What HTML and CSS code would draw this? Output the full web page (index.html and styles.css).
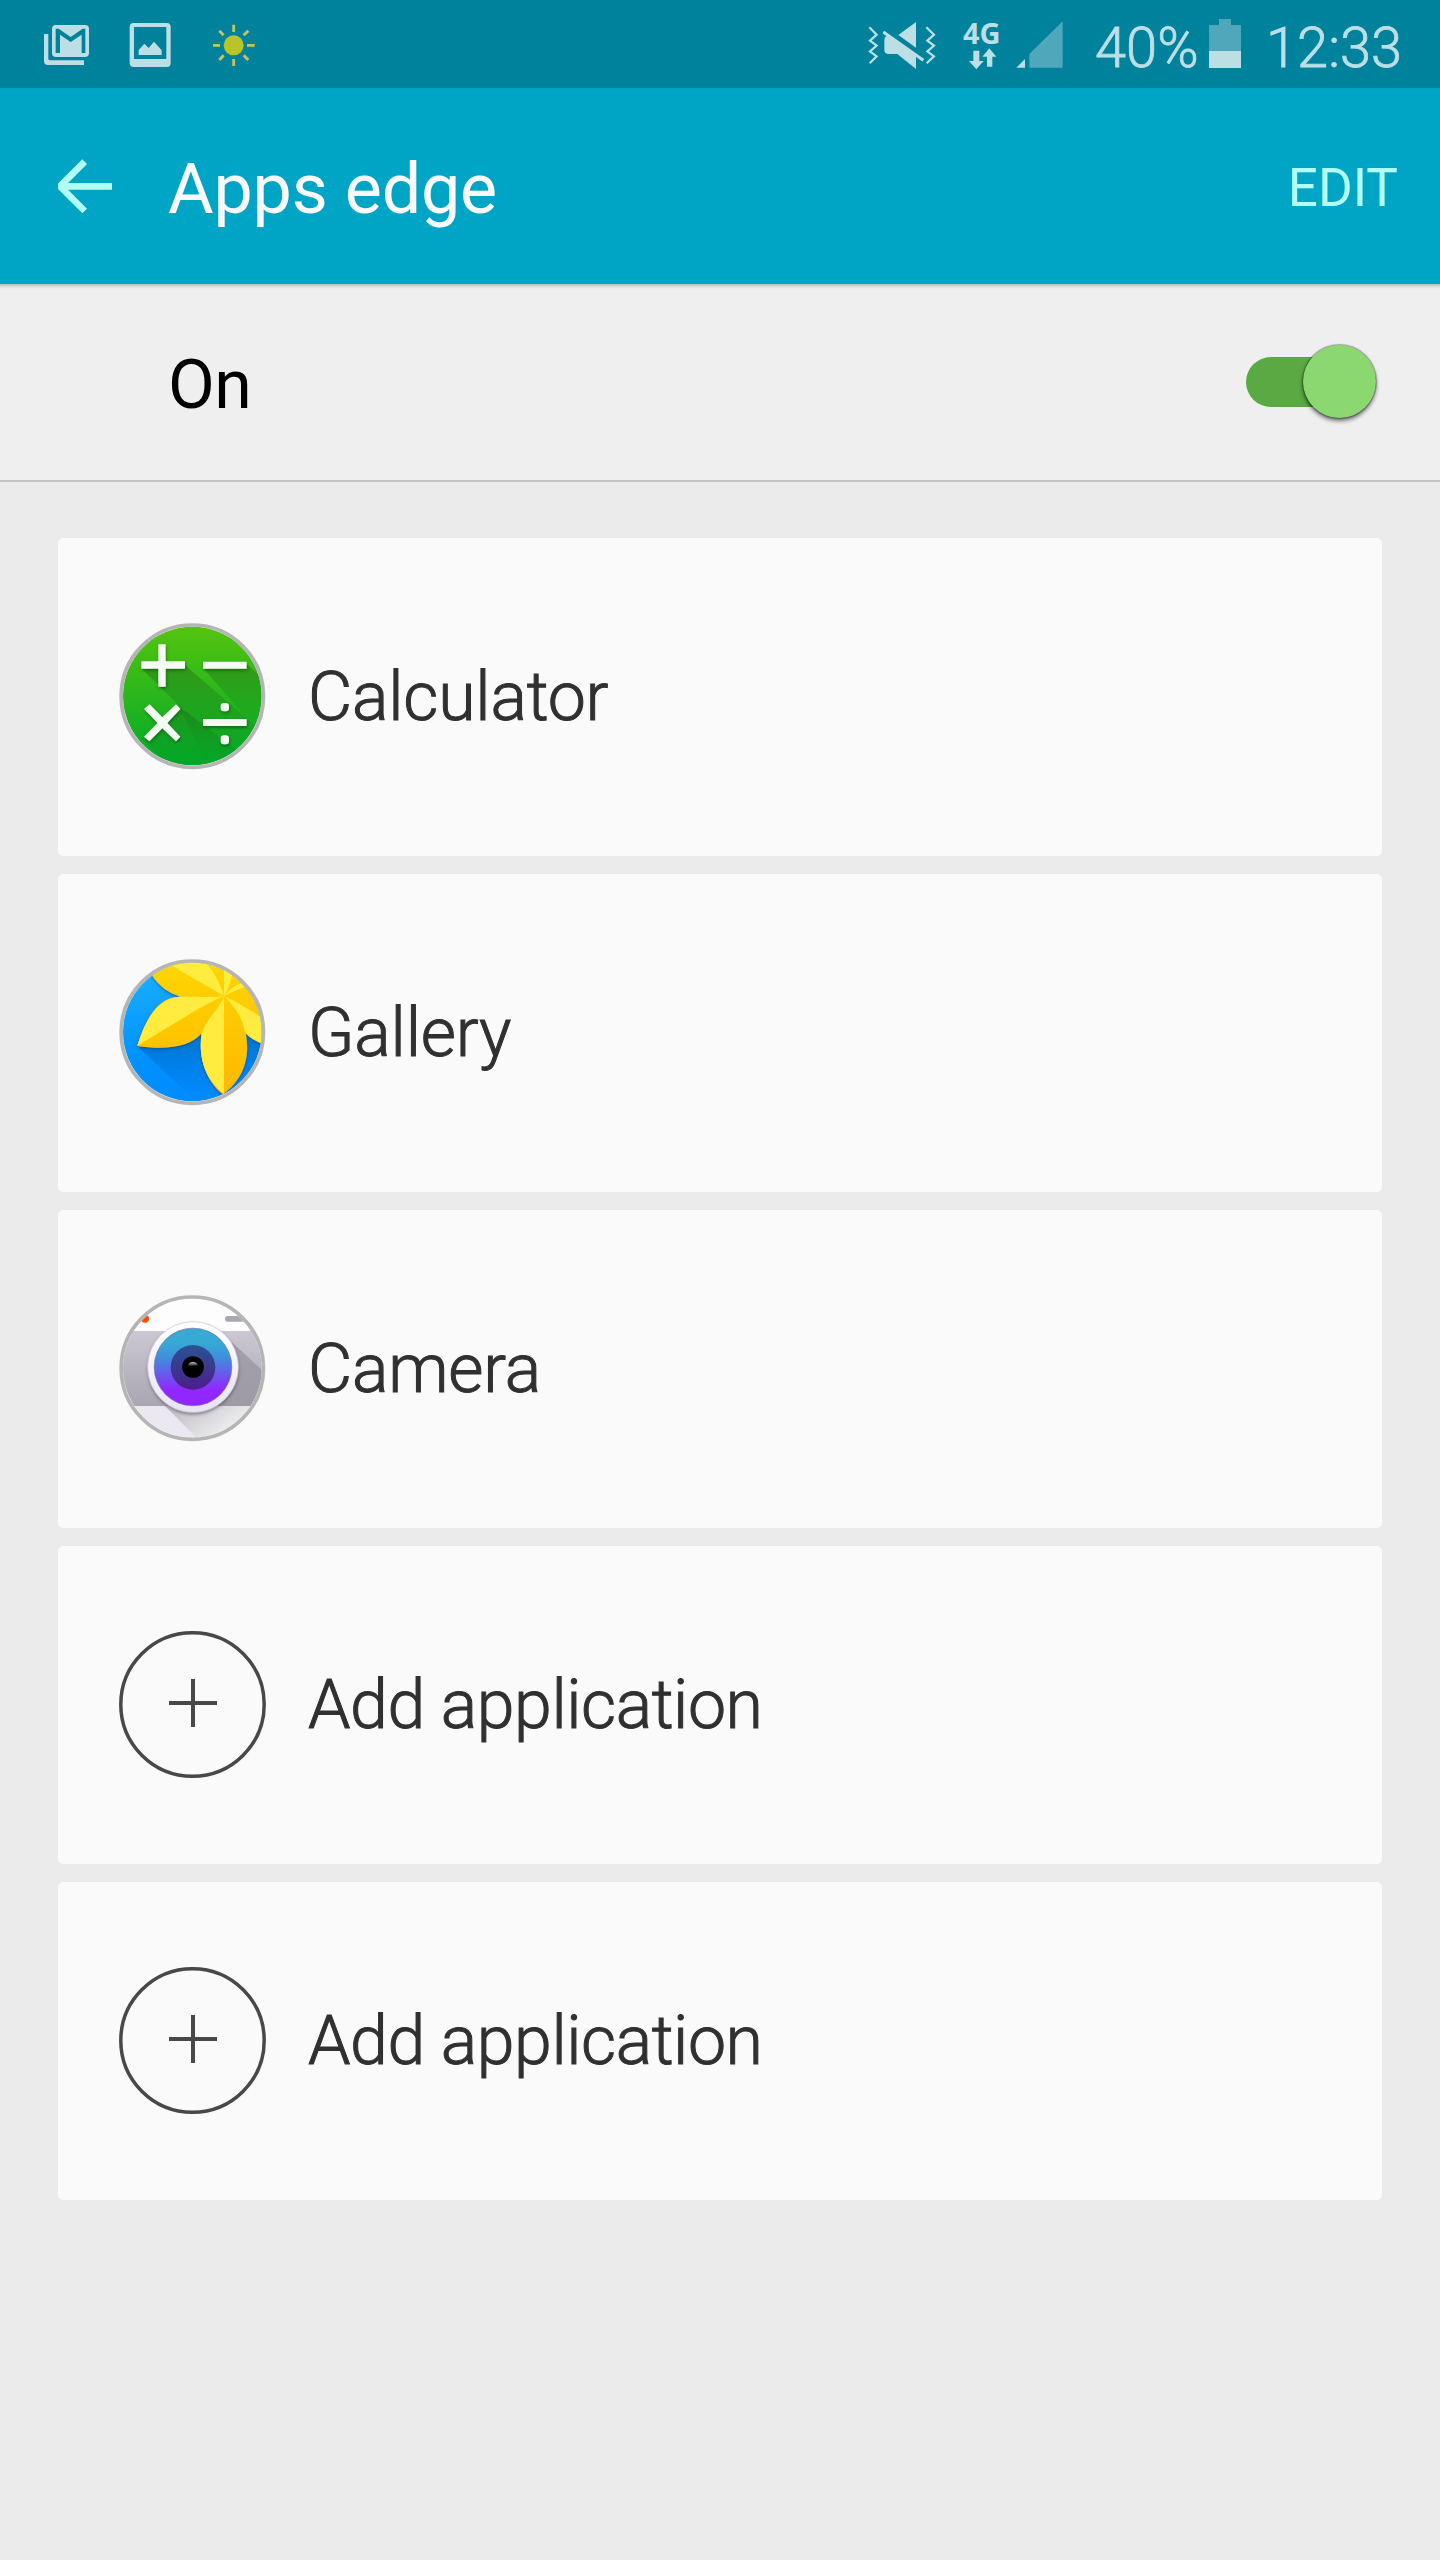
FILE: index.html
```html
<!DOCTYPE html>
<html lang="en">
<head>
<meta charset="utf-8">
<title>Apps edge</title>
<link rel="stylesheet" href="styles.css">
</head>
<body>
<div class="status">
  <svg class="notifications" width="260" height="88" viewBox="0 0 780 264">
    <g fill="#bbdfe5">
      <path d="M72 102h13v74q0 5 5 5h102v14H84q-12 0-12-12z"/>
      <path fill-rule="evenodd" d="M108 75h87q12 0 12 12v72q0 12-12 12h-87q-12 0-12-12V87q0-12 12-12zM107 86v73h13v-55l32 22 33-22v55h11V86h-8l-36 25-36-25z"/>
      <path fill-rule="evenodd" d="M341 69h99q12 0 12 12v108q0 12-12 12h-99q-12 0-12-12V81q0-12 12-12zM342 81v96h97V81z"/>
      <path d="M356 165v-15l17-19 13 13 16-19 23 26v14z"/>
    </g>
    <circle cx="641" cy="136" r="30" fill="#bbc32b"/>
    <path d="M641 74v22M641 177v21M579 136h21M681 136h23M598 92l13 14M671 106l14-14M598 180l13-14M671 166l14 14" stroke="#bdc95e" stroke-width="8.5"/>
  </svg>
  <svg class="mute" width="68" height="88" viewBox="84 0 204 264">
    <path d="M88 82l22 22-20 18 20 15-20 17 20 15-21 21M259 82l23 22-20 18 20 15-20 17 20 15-22 21" fill="none" stroke="#bbdfe5" stroke-width="6.5"/>
    <path d="M175 105l53-39v77zM139 108l8 1 81 59v39l-56-45h-26q-13 0-13-13v-28q0-9 6-13z" fill="#bbdfe5"/>
    <path d="M130 96l120 85" stroke="#bbdfe5" stroke-width="9"/>
  </svg>
  <div class="network">
    <span class="network-label">4G</span>
    <svg width="28" height="22" viewBox="387 145 84 66"><path d="M400 153h18v31h13l-22 25-22-25h13zM441 201v-30h-14l21-25 21 25h-12v30z" fill="#bbdfe5"/></svg>
  </div>
  <svg class="signal" width="48" height="88" viewBox="528 0 144 264">
    <path d="M568 203v-41l100-98v139z" fill="#4ea7ba"/><path d="M529 203l26-26v26z" fill="#bbdfe5"/>
  </svg>
  <span class="battery-text">40%</span>
  <svg class="battery" width="32" height="88" viewBox="0 0 32 88">
    <path d="M0 25h10v-6h12v6h10v26H0z" fill="#4ea7ba"/><path d="M0 51h32v17H0z" fill="#bbdfe5"/>
  </svg>
  <span class="clock">12:33</span>
</div>
<header class="appbar">
  <svg class="back" width="60" height="60" viewBox="0 0 180 180"><path d="M80 9L6 83l74 74M17 83h145" transform="translate(0 5)" fill="none" stroke="#b2fff3" stroke-width="20"/></svg>
  <h1 class="title">Apps edge</h1>
  <span class="edit">EDIT</span>
</header>
<section class="master">
  <span class="master-label">On</span>
  <div class="switch"><div class="thumb"></div></div>
</section>
<main class="list">
  <div class="card">
    <svg class="icon" viewBox="24 36 444 444">
      <defs>
        <linearGradient id="calc" x1="0" y1="0" x2="0" y2="1"><stop offset="0" stop-color="#53c40f"/><stop offset="1" stop-color="#00aa29"/></linearGradient>
        <linearGradient id="shade" x1="0" y1="0" x2="0" y2="1"><stop offset="0" stop-color="#185018" stop-opacity=".34"/><stop offset="1" stop-color="#087a22" stop-opacity="0"/></linearGradient>
        <clipPath id="disc"><circle cx="247" cy="258" r="208"/></clipPath>
        <filter id="drop" x="-20%" y="-20%" width="140%" height="150%"><feDropShadow dx="2" dy="5" stdDeviation="4" flood-color="#003000" flood-opacity=".5"/></filter>
      </defs>
      <circle cx="247" cy="258" r="208" fill="url(#calc)"/>
      <g clip-path="url(#disc)" fill="url(#shade)">
        <path d="M94 175L224 165 440 350 350 480 300 480 205 285z"/>
        <path d="M280 175l130-12 60 50v180z"/>
        <path d="M104 392L208 290 380 420 260 490H190z"/>
      </g>
      <g fill="#f5fcf3" filter="url(#drop)">
        <path d="M145 103h22v51h58v22h-58v54h-22v-54H94v-22h51zM279 155h131v21H279zM279 327h131v21H279z"/>
        <path d="M119 283l38 39 41-39 13 14-39 42 39 41-13 14-41-39-39 39-16-14 41-41-41-42z"/>
        <rect x="332" y="279" width="25" height="25" rx="10"/><rect x="332" y="376" width="25" height="27" rx="10"/>
      </g>
      <circle cx="247" cy="258.500" r="213.500" fill="none" stroke="#b5b5b5" stroke-width="11"/>
    </svg>
    <span class="label">Calculator</span>
  </div>
  <div class="card">
    <svg class="icon" viewBox="24 36 444 444">
      <defs>
        <linearGradient id="sky" x1="0" y1="0" x2="0" y2="1"><stop offset="0" stop-color="#1cb1ff"/><stop offset=".7" stop-color="#0091ff"/><stop offset="1" stop-color="#008cff"/></linearGradient>
        <linearGradient id="gold" gradientUnits="userSpaceOnUse" x1="0" y1="50" x2="0" y2="445"><stop offset="0" stop-color="#ffd500"/><stop offset="1" stop-color="#ffb800"/></linearGradient>
        <linearGradient id="cast" gradientUnits="userSpaceOnUse" x1="200" y1="300" x2="200" y2="460"><stop offset="0" stop-color="#005bb0" stop-opacity=".5"/><stop offset="1" stop-color="#0070df" stop-opacity=".08"/></linearGradient>
        <filter id="leafdrop" x="-20%" y="-20%" width="140%" height="140%"><feDropShadow dx="0" dy="4" stdDeviation="4" flood-color="#003a78" flood-opacity=".6"/></filter>
      </defs>
      <circle cx="247" cy="258" r="208" fill="url(#sky)"/>
      <g clip-path="url(#disc)">
        <path d="M82 300L250 460 345 445 273 262z" fill="url(#cast)"/>
        <path d="M410 262l50 30v50L345 445z" fill="url(#cast)"/>
        <g filter="url(#leafdrop)">
          <path d="M342 150C300 160 250 157 212 152 175 142 145 118 126 88L170 40H480V300Q430 288 407 262C424 345 390 410 338 445 295 410 262 345 275 262 240 305 165 312 82 300 108 215 145 150 212 152z" fill="url(#gold)"/>
        </g>
        <g fill="#ffec3e">
          <path d="M342 150L180 56 195 40H275L290 52Q322 88 342 150z"/>
          <path d="M342 150C300 157 250 150 212 152 145 155 106 220 82 299L205 225Q275 180 342 150z"/>
          <path d="M342 150V443C295 410 262 345 275 262 290 215 325 195 342 150z"/>
          <path d="M342 150V70L368 82Q360 120 342 150z"/>
          <path d="M342 150Q370 118 394 112L405 122Q374 133 342 150z"/>
          <path d="M342 150Q400 177 460 218V295Q425 280 405 260 398 205 342 150z"/>
        </g>
      </g>
      <circle cx="247" cy="258.500" r="213.500" fill="none" stroke="#b5b5b5" stroke-width="11"/>
    </svg>
    <span class="label">Gallery</span>
  </div>
  <div class="card">
    <svg class="icon" viewBox="24 36 444 444">
      <defs>
        <linearGradient id="band" x1="0" y1="0" x2="0" y2="1"><stop offset="0" stop-color="#cbc7d3"/><stop offset="1" stop-color="#aaa6b1"/></linearGradient>
        <linearGradient id="lens" x1="0" y1="0" x2="0" y2="1"><stop offset=".2" stop-color="#36a9d5"/><stop offset=".4" stop-color="#428ade"/><stop offset=".8" stop-color="#9126ff"/></linearGradient>
        <linearGradient id="iris" x1="0" y1="0" x2="0" y2="1"><stop offset="0" stop-color="#285493"/><stop offset="1" stop-color="#4e1d8b"/></linearGradient>
        <linearGradient id="rim" x1="0" y1="0" x2="0" y2="1"><stop offset="0" stop-color="#fff"/><stop offset="1" stop-color="#e9e3f3"/></linearGradient>
        <linearGradient id="glint" x1="0" y1="0" x2="0" y2="1"><stop offset="0" stop-color="#ccc"/><stop offset="1" stop-color="#222"/></linearGradient>
        <linearGradient id="fade" gradientUnits="userSpaceOnUse" x1="220" y1="370" x2="300" y2="480"><stop offset="0" stop-color="#c4c2c8"/><stop offset="1" stop-color="#ecebee"/></linearGradient>
        <linearGradient id="bandshade" gradientUnits="userSpaceOnUse" x1="380" y1="180" x2="380" y2="372"><stop offset="0" stop-color="#a39faa"/><stop offset="1" stop-color="#9e9aa6"/></linearGradient>
        <filter id="rimdrop" x="-20%" y="-20%" width="140%" height="140%"><feDropShadow dx="1" dy="6" stdDeviation="5" flood-color="#403850" flood-opacity=".5"/></filter>
      </defs>
      <circle cx="247" cy="258" r="208" fill="#fdfdfd"/>
      <g clip-path="url(#disc)">
        <path d="M30 372h440v110H30z" fill="#ebe8f1"/>
        <path d="M165 372h305v40L400 480H272z" fill="url(#fade)"/>
        <path d="M30 147h440v225H30z" fill="url(#band)"/>
        <path d="M365 180L460 268V372H300z" fill="url(#bandshade)"/>
        <circle cx="105" cy="110" r="12" fill="#ff4d00"/>
        <rect x="345" y="102" width="70" height="17" rx="8" fill="#aaa6b4"/>
      </g>
      <circle cx="249" cy="255" r="136" fill="url(#rim)" stroke="#c9c5cf" stroke-width="2" filter="url(#rimdrop)"/>
      <circle cx="249" cy="255" r="116.500" fill="url(#lens)" stroke="#766ca0" stroke-width="2"/>
      <circle cx="249" cy="256" r="67" fill="url(#iris)"/>
      <circle cx="249" cy="255" r="32.500" fill="#000"/>
      <path d="M234 251q2-11 15-11t14 11z" fill="url(#glint)"/>
      <circle cx="247" cy="258.500" r="213.500" fill="none" stroke="#b5b5b5" stroke-width="11"/>
    </svg>
    <span class="label">Camera</span>
  </div>
  <div class="card">
    <svg class="icon" viewBox="0 0 148 148"><g fill="none" stroke="#484848"><circle cx="74.500" cy="74.500" r="71.700" stroke-width="3.500"/><path d="M51 73h48M75 49v48" stroke-width="4"/></g></svg>
    <span class="label add">Add application</span>
  </div>
  <div class="card">
    <svg class="icon" viewBox="0 0 148 148"><g fill="none" stroke="#484848"><circle cx="74.500" cy="74.500" r="71.700" stroke-width="3.500"/><path d="M51 73h48M75 49v48" stroke-width="4"/></g></svg>
    <span class="label add">Add application</span>
  </div>
</main>
</body>
</html>
```

FILE: styles.css
```css
* { box-sizing: border-box; }
body { margin: 0; width: 1440px; height: 2560px; background: #ebebeb; font-family: Roboto, sans-serif; display: flex; flex-direction: column; }
svg { display: block; flex: none; }
span, h1 { white-space: nowrap; }

.status { height: 88px; flex: none; display: flex; background: #00829d; color: #bbdfe5; padding-left: 20px; }
.mute { margin-left: 588px; }
.network { margin-left: 27px; width: 38px; padding-top: 17px; }
.network-label { display: block; height: 31px; line-height: 31px; font: 700 29px/31px "Noto Sans", sans-serif; }
.network svg { margin-left: 6px; }
.signal { margin-left: 15px; }
.battery-text, .clock { font-size: 56px; font-weight: 300; line-height: 96px; -webkit-text-stroke: .8px #bbdfe5; }
.battery-text { margin-left: 31px; width: 114px; }
.clock { margin-left: 25px; }

.appbar { height: 196px; flex: none; display: flex; background: #00a5c5; padding: 0 42px 0 54px; }
.back { margin: 69px -4px 0 4px; }
.title { margin: 0 auto 0 54px; font-size: 70px; font-weight: 400; line-height: 202px; letter-spacing: -.2px; color: #fafafa; }
.edit { font-size: 53px; line-height: 200px; color: #b2fff3; }

.master { height: 198px; flex: none; display: flex; justify-content: space-between; background: linear-gradient(#bbb, #e2e2e2 3px, #efefef 5px); padding: 0 64px 0 168px; border-bottom: 2px solid #c2c2c2; }
.master-label { font-size: 68px; line-height: 202px; letter-spacing: -.5px; color: #000; }
.switch { width: 130px; height: 50px; margin-top: 73px; border-radius: 25px; background: #5aa943; display: flex; justify-content: flex-end; }
.thumb { width: 73px; height: 73px; margin-top: -12px; border-radius: 50%; background: #8ad86f; box-shadow: 0 3px 4px rgba(0,0,0,.55), 0 0 1px 1px rgba(0,0,0,.3); }

.list { display: flex; flex-direction: column; gap: 18px; padding: 56px 58px 0; }
.card { height: 318px; display: flex; background: #fafafa; border-radius: 5px; padding-left: 60px; }
.icon { width: 148px; height: 148px; margin-top: 84px; }
.label { margin-left: 42px; font-size: 68px; font-weight: 300; line-height: 318px; letter-spacing: -.2px; color: #303030; -webkit-text-stroke: 1px #303030; }
.add { letter-spacing: -.45px; }
```
